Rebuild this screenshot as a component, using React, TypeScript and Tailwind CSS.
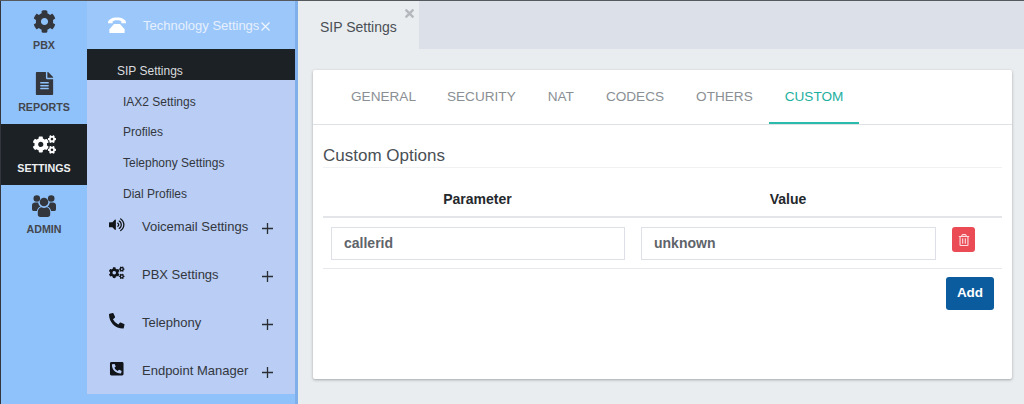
import { FaCog, FaFileAlt, FaCogs, FaVolumeUp, FaPhoneAlt, FaPhoneSquareAlt, FaRegTrashAlt, FaTimes } from "react-icons/fa";
import type { ReactNode } from "react";

const font = { fontFamily: '"Liberation Sans", Arial, sans-serif' };

function Rail({ icon, label, active, h }: { icon: ReactNode; label: string; active?: boolean; h: string }) {
  return (
    <div className={`flex flex-col items-center pt-[8px] ${h} ${active ? "bg-[#1c2125] text-white" : "text-[#33373d]"}`}>
      <div className="flex h-[25px] items-center justify-center text-[23px]">{icon}</div>
      <div className={`mt-[4px] text-[10.7px] font-bold leading-[14px] ${active ? "text-[#eef0f2]" : "text-[#43474d]"}`}>{label}</div>
    </div>
  );
}

function Sub({ children, h, active }: { children: ReactNode; h: string; active?: boolean }) {
  return <div className={`flex items-center pt-[12px] text-[12px] ${h} ${active ? "bg-[#1c2125] pl-[30px] text-[#d9dcdf]" : "pl-[36px] text-[#33373d]"}`}>{children}</div>;
}

function Group({ icon, label, h }: { icon: ReactNode; label: string; h: string }) {
  return (
    <div className={`flex items-center text-[#33373d] ${h}`}>
      <div className="ml-[22px] -mt-[4px] flex w-[21px] justify-start text-[15.5px] text-[#111418]">{icon}</div>
      <div className="ml-[12px] w-[108px] whitespace-nowrap text-[13px]">{label}</div>
      <svg width="11" height="11" viewBox="0 0 11 11" className="ml-[12px] mt-[3px]"><path d="M5.5 0v11M0 5.5h11" stroke="#2a2e33" strokeWidth="1.3" /></svg>
    </div>
  );
}

function OldPhone() {
  return (
    <svg width="18" height="16" viewBox="0 0 18 16" fill="#ffffff">
      <path d="M0 5.600C0 2.400 4 .4 9 .4s9 2 9 5.200v.6h-4.600V4.700c0-.8-2-1.500-4.400-1.500s-4.400.7-4.400 1.500v1.500H0z" />
      <path d="M6 7h6l4.600 5.200V16H1.400v-3.800z" />
    </svg>
  );
}

function Users() {
  return (
    <svg width="24" height="22" viewBox="0 0 24 22" fill="currentColor">
      <circle cx="4.800" cy="3.500" r="3.300" />
      <circle cx="19.200" cy="3.500" r="3.300" />
      <circle cx="12" cy="7" r="4.300" />
      <path d="M0 10.500C0 8.500 1.500 7.600 3 7.600h3.200c.3 2 1 3 2.300 4-2 .8-3.300 2.400-3.500 4.400H1.500C.5 16 0 15 0 14z" />
      <path d="M24 10.500c0-2-1.500-2.900-3-2.900h-3.200c-.3 2-1 3-2.300 4 2 .8 3.300 2.400 3.500 4.400h3.500c1 0 1.500-1 1.500-2z" />
      <path d="M5.800 17c0-3 2-4.800 3.800-4.800.7.500 1.500.8 2.400.8s1.700-.3 2.400-.8c1.800 0 3.800 1.800 3.800 4.800v2.500c0 1.500-1 2.500-2.500 2.500H8.300c-1.500 0-2.500-1-2.500-2.500z" />
    </svg>
  );
}

function Tab({ label, active, ml }: { label: string; active?: boolean; ml?: string }) {
  return (
    <div className={`flex h-[54px] items-center px-[16px] text-[13.6px] ${ml ?? ""} ${active ? "border-b-2 border-[#2bbbad] pt-[2px] text-[#1eb0a0]" : "text-[#8a8f94]"}`}>{label}</div>
  );
}

function Field({ value, w }: { value: string; w: string }) {
  return (
    <div className={`flex h-[33px] items-center border border-[#dde1e7] pl-[12px] text-[14px] font-bold text-[#5f646a] ${w}`}>{value}</div>
  );
}

export default function App() {
  return (
    <div style={font} className="flex h-[404px] w-[1024px] overflow-hidden border-t border-[#55585c] bg-[#e9edf0]">
      <div className="flex w-[87px] shrink-0 flex-col border-l border-[#33373d] bg-[#8fc1fb]">
        <Rail h="h-[62px]" icon={<FaCog />} label="PBX" />
        <Rail h="h-[61px]" icon={<FaFileAlt />} label="REPORTS" />
        <Rail h="h-[61px]" active icon={<FaCogs />} label="SETTINGS" />
        <Rail h="h-[62px]" icon={<Users />} label="ADMIN" />
      </div>
      <div className="w-[211px] shrink-0 border-r-[3px] border-[#80b0ea] bg-[#8fc1fb]">
        <div className="flex h-[48px] items-center bg-[#9cc7fb] text-white">
          <div className="ml-[21px] w-[22px]"><OldPhone /></div>
          <div className="ml-[13px] mt-[2px] whitespace-nowrap text-[13px] text-[#e6f0fc]">Technology Settings</div>
          <svg width="9" height="9" viewBox="0 0 9 9" className="ml-[2px] mt-[2px]"><path d="M.5.500l8 8M8.500.500l-8 8" stroke="#eef5fd" strokeWidth="1.200" /></svg>
        </div>
        <div className="h-[345px] bg-[#b9cdf5]">
          <Sub active h="h-[31px]">SIP Settings</Sub>
          <Sub h="h-[31px]">IAX2 Settings</Sub>
          <Sub h="h-[30px]">Profiles</Sub>
          <Sub h="h-[31px]">Telephony Settings</Sub>
          <Sub h="h-[31px]">Dial Profiles</Sub>
          <Group h="h-[48px]" icon={<FaVolumeUp />} label="Voicemail Settings" />
          <Group h="h-[48px]" icon={<FaCogs />} label="PBX Settings" />
          <Group h="h-[48px]" icon={<FaPhoneAlt />} label="Telephony" />
          <Group h="h-[47px]" icon={<FaPhoneSquareAlt />} label="Endpoint Manager" />
        </div>
      </div>
      <div className="flex min-w-0 flex-1 flex-col">
        <div className="flex h-[48px] shrink-0 bg-[#dce1e9]">
          <div className="relative flex w-[121px] items-center bg-[#e9edf0] pl-[22px] pt-[4px] text-[14px] text-[#4a4f55]">
            SIP Settings
            <FaTimes className="absolute left-[105px] top-[6px] text-[13px] text-[#b5b9bd]" />
          </div>
        </div>
        <div className="ml-[15px] mt-[21px] h-[309px] w-[699px] rounded-[2px] bg-white shadow-[0_1px_3px_rgba(0,0,0,0.3)]">
          <div className="flex h-[55px] border-b border-[#dfe2e5] pl-[22px]">
            <Tab label="GENERAL" />
            <Tab label="SECURITY" ml="-ml-[1px]" />
            <Tab label="NAT" />
            <Tab label="CODECS" />
            <Tab label="OTHERS" />
            <Tab active label="CUSTOM" />
          </div>
          <div className="px-[10px]">
            <div className="mt-[20px] h-[23px] border-b border-[#f0f1f3] text-[17px] leading-[22px] text-[#4a4f55]">Custom Options</div>
            <div className="flex h-[50px] items-center border-b-2 border-[#e3e5e8] pt-[14px] text-[14px] font-bold text-[#24282c]">
              <div className="w-[309px] text-center">Parameter</div>
              <div className="w-[312px] text-center">Value</div>
            </div>
            <div className="flex h-[51px] items-start border-b border-[#e6e8eb] pl-[8px] pt-[9px]">
              <Field value="callerid" w="w-[294px]" />
              <div className="ml-[16px]"><Field value="unknown" w="w-[295px]" /></div>
              <div className="ml-[16px] flex h-[25px] w-[23px] items-center justify-center rounded-[3px] bg-[#ea4b55] text-[12px] text-[#fbdcdf]"><FaRegTrashAlt /></div>
            </div>
            <div className="mt-[8px] flex justify-end pr-[8px]">
              <div className="flex h-[33px] w-[48px] items-center justify-center rounded-[3px] bg-[#0b5c9e] text-[13.5px] font-bold text-white">Add</div>
            </div>
          </div>
        </div>
      </div>
    </div>
  );
}
